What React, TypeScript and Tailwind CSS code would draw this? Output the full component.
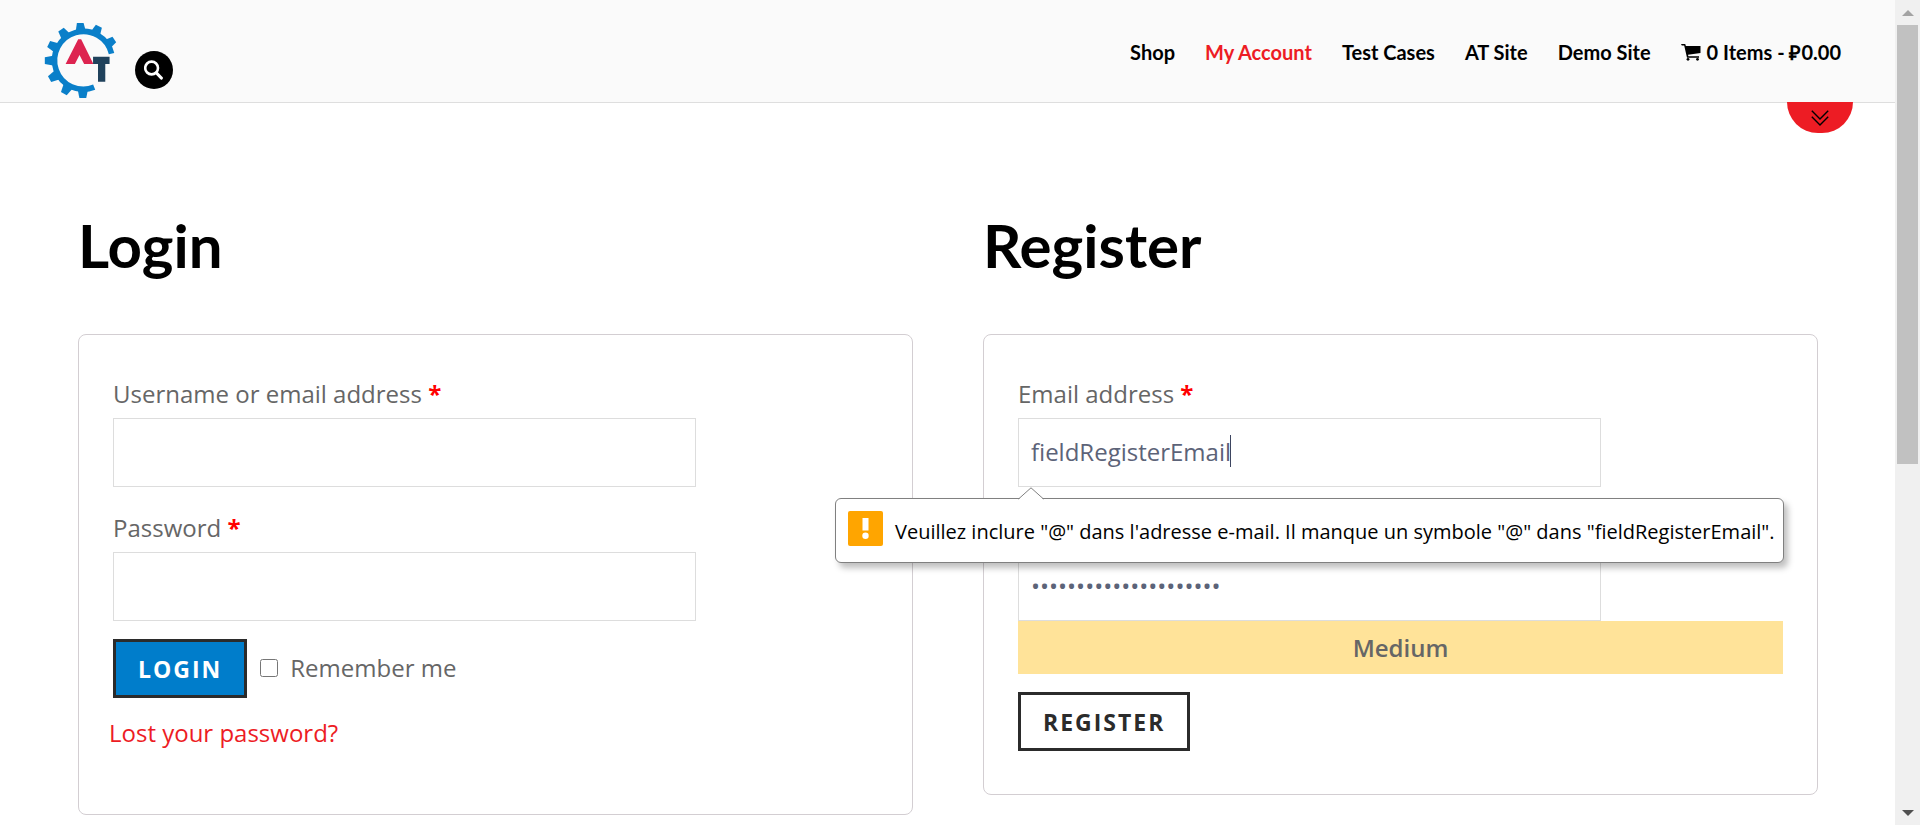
import { useState } from "react";
import type { ReactNode } from "react";

const TEETH = [-94, -65, -34, -125, -154, 180, 151, 120, 90];

function Logo() {
  return (
    <svg viewBox="72 68 220 227" className="h-[75px] w-[73px]" role="img" aria-label="Automation Testing">
      <path d="M223.400 262.400A87.500 87.500 0 1 1 276 161" fill="none" stroke="#0a7fc9" strokeWidth="17" />
      {TEETH.map((a) => (
        <path key={a} d="M90 -15L115 -10V10L90 15Z" transform={`translate(189 182) rotate(${a})`} fill="#0a7fc9" />
      ))}
      <path d="M175 117h9l37 75h-28l-14-27-14 27h-28Z" fill="#dd2450" />
      <path d="M220 170h50v22h-13v54h-22v-54h-15Z" fill="#20425c" />
    </svg>
  );
}

function CartIcon() {
  return (
    <svg viewBox="0 0 20 17" className="h-[17px] w-5" fill="currentColor" aria-hidden="true">
      <path d="M0 0h4.200l.7 1.900H19.500v7L7 10.800l.4 1.500H18v1.400H6L3.200 1.600H.8Z" />
      <circle cx="7" cy="15.300" r="1.400" />
      <circle cx="16.500" cy="15.300" r="1.400" />
    </svg>
  );
}

const LINKS = ["Shop", "My Account", "Test Cases", "AT Site", "Demo Site"];

function Header() {
  return (
    <header className="relative flex h-[103px] items-start justify-between border-b border-[#dedede] bg-[#fafafa] pr-[54px] pl-11">
      <div className="flex items-start gap-[18px]">
        <a href="#home" className="mt-[23px]">
          <Logo />
        </a>
        <button type="button" aria-label="Search" className="mt-[51px] flex size-[38px] items-center justify-center rounded-full bg-black text-white">
          <svg viewBox="0 0 20 20" className="size-5" fill="none" stroke="currentColor" aria-hidden="true">
            <circle cx="7.600" cy="8" r="6.400" strokeWidth="2.600" />
            <path d="M12.500 13l4.800 5" strokeWidth="3.200" strokeLinecap="round" />
          </svg>
        </button>
      </div>
      <nav className="mt-[39px] flex items-center gap-[30px] font-[Lato,sans-serif] text-[20px] leading-[26px] font-bold text-black">
        {LINKS.map((l) => (
          <a key={l} href={"#" + l} className={l === "My Account" ? "text-[#ed1c24]" : "text-black"}>
            {l}
          </a>
        ))}
        <a href="#cart" className="flex items-center gap-1.5">
          <CartIcon />
          0 Items - ₽0.00
        </a>
      </nav>
      <button type="button" aria-label="Show more" className="absolute top-[102px] right-[42px] flex h-[31px] w-[66px] items-center justify-center rounded-b-[33px] bg-[#ed1c24] text-black">
        <svg viewBox="0 0 18 16" className="h-4 w-[18px]" fill="none" stroke="currentColor" strokeWidth="1.400" aria-hidden="true">
          <path d="M.8.8L9 9 17.200.8M.8 6.800L9 15l8.200-8.200" />
        </svg>
      </button>
    </header>
  );
}

function Label({ htmlFor, children }: { htmlFor: string; children: ReactNode }) {
  return (
    <label htmlFor={htmlFor} className="block leading-9">
      {children} <span className="font-bold text-[#ff0000]">*</span>
    </label>
  );
}

const INPUT = "mt-1.5 block h-[69px] w-[583px] max-w-full border border-[#dddddd] bg-white px-3 pb-0.5 text-[24px] text-[#5c6378] outline-none";
const BUTTON = "h-[59px] border-3 border-[#2b2b2b] px-[22px] text-[23px] font-bold tracking-[2px] uppercase";
const CARD = "rounded-lg border border-[#d3ced2] px-[34px] pt-[41px] leading-9";
const TITLE = "mb-[53px] font-[Lato,sans-serif] text-[60px] leading-[72px] font-bold text-black";

function Tooltip() {
  return (
    <div role="alert" className="absolute top-full -left-[183px] z-10 mt-[11px] flex h-[65px] items-center gap-3 rounded-md border border-[#808080] bg-white pr-2 pl-3 font-['Open_Sans',sans-serif] text-[20px] whitespace-nowrap text-black shadow-[4px_5px_6px_rgba(0,0,0,0.25)]">
      <svg viewBox="0 0 26 13" className="absolute -top-3 left-[182px] h-[13px] w-[26px]" aria-hidden="true">
        <path d="M0 13L13 .8 26 13Z" fill="#fff" />
        <path d="M.5 12L13 .8 25.500 12" fill="none" stroke="#808080" />
      </svg>
      <svg viewBox="0 0 35 35" className="mb-1 size-[35px]" aria-hidden="true">
        <rect width="35" height="35" rx="2" fill="#ffa500" />
        <rect x="14.500" y="7" width="6" height="12.500" fill="#fff" />
        <circle cx="17.500" cy="24.700" r="3.200" fill="#fff" />
      </svg>
      <span className="pt-0.5">Veuillez inclure "@" dans l'adresse e-mail. Il manque un symbole "@" dans "fieldRegisterEmail".</span>
    </div>
  );
}

function LoginForm() {
  return (
    <section className="min-w-0 flex-1">
      <h2 className={TITLE}>Login</h2>
      <form className={CARD + " pb-[63px]"}>
        <Label htmlFor="username">Username or email address</Label>
        <input id="username" type="text" className={INPUT} />
        <div className="mt-[23px]">
          <Label htmlFor="password">Password</Label>
          <input id="password" type="password" className={INPUT} />
        </div>
        <div className="mt-[18px] flex items-center">
          <button type="button" className={BUTTON + " bg-[#007dcb] text-white"}>Login</button>
          <div className="flex items-center pb-0.5">
            <input id="remember" type="checkbox" className="ml-[13px] size-[18px]" />
            <label htmlFor="remember" className="ml-3">Remember me</label>
          </div>
        </div>
        <a href="#lost" className="mt-[17px] -ml-1 block w-fit text-[#ed1c24]">Lost your password?</a>
      </form>
    </section>
  );
}

function RegisterForm() {
  const [email, setEmail] = useState("fieldRegisterEmail");
  const [pass, setPass] = useState("fieldRegisterPassword");
  return (
    <section className="min-w-0 flex-1">
      <h2 className={TITLE}>Register</h2>
      <form className={CARD + " pb-[43px]"}>
        <Label htmlFor="email">Email address</Label>
        <div className="relative">
          <input id="email" type="text" value={email} onChange={(e) => setEmail(e.target.value)} className={INPUT} />
          <span className="absolute top-[17px] left-[212px] h-8 w-px bg-[#3d4560]" />
          <Tooltip />
        </div>
        <div className="mt-[23px]">
          <Label htmlFor="new-password">Password</Label>
          <input id="new-password" type="password" value={pass} onChange={(e) => setPass(e.target.value)} className={INPUT} />
        </div>
        <div className="h-[53px] bg-[#ffe399] text-center leading-[53px] font-semibold">Medium</div>
        <button type="button" className={BUTTON + " mt-[18px] bg-white text-[#2b2b2b]"}>Register</button>
      </form>
    </section>
  );
}

function Scrollbar() {
  return (
    <div className="flex h-screen w-[25px] shrink-0 flex-col bg-[#f0f0f0] px-0.5" aria-hidden="true">
      <div className="flex h-[25px] items-center justify-center">
        <svg viewBox="0 0 12 6" className="h-1.5 w-3"><path d="M0 6L6 0l6 6Z" fill="#a3a3a3" /></svg>
      </div>
      <div className="h-[439px] bg-[#c1c1c1]" />
      <div className="mt-auto flex h-[25px] items-center justify-center">
        <svg viewBox="0 0 12 6" className="h-1.5 w-3"><path d="M0 0h12L6 6Z" fill="#505050" /></svg>
      </div>
    </div>
  );
}

export default function App() {
  return (
    <div className="flex min-h-screen bg-white font-['Open_Sans',sans-serif] text-[24px] text-[#666666]">
      <div className="min-w-0 flex-1">
        <Header />
        <main className="flex items-start gap-[70px] pt-[106px] pr-[77px] pl-[78px]">
          <LoginForm />
          <RegisterForm />
        </main>
      </div>
      <Scrollbar />
    </div>
  );
}
